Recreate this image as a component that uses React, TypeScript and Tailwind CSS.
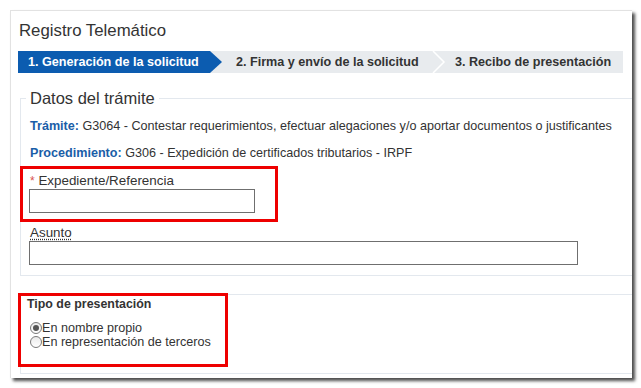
import React from 'react'

const font = { fontFamily: '"Liberation Sans", Arial, sans-serif' }

function Radio({ checked }: { checked?: boolean }) {
  return (
    <span className="inline-flex items-center justify-center w-[12px] h-[12px] rounded-full border border-[#7a7a7a] bg-gradient-to-b from-[#eaeaea] to-white">
      {checked && <span className="w-[6px] h-[6px] rounded-full bg-[#555]" />}
    </span>
  )
}

export default function App() {
  return (
    <div
      className="w-[641px] h-[388px] bg-white pt-[10px] pl-[10px] text-[#333]"
      style={font}
    >
      <div className="relative w-[622px] h-[368px] bg-white border-t border-l border-[#e2e2e2] shadow-[3px_3px_3px_rgba(0,0,0,0.7)]">
        {/* Título */}
        <div className="h-[40px] pl-[8px] flex items-center text-[16.8px] text-[#333]">
          Registro Telemático
        </div>

        {/* Pasos */}
        <div className="relative ml-[7px] w-[605px] h-[22px] bg-[#e8ebee] flex items-center text-[12.6px] font-bold">
          <div className="absolute left-0 top-0 h-[22px] w-[204px] bg-[#0c5cb0] [clip-path:polygon(0_0,192px_0,204px_50%,192px_100%,0_100%)]" />
          <span className="relative pl-[10px] w-[218px] text-white">
            1. Generación de la solicitud
          </span>
          <span className="relative text-[#333]">2. Firma y envío de la solicitud</span>
          <svg
            className="absolute left-[414px] top-0"
            width="14"
            height="22"
            viewBox="0 0 14 22"
          >
            <polyline
              points="1,0 12,11 1,22"
              fill="none"
              stroke="#fff"
              strokeWidth="1.5"
            />
          </svg>
          <span className="absolute left-[437px] text-[#333]">
            3. Recibo de presentación
          </span>
        </div>

        {/* Datos del trámite */}
        <fieldset className="mt-[16px] ml-[9px] border-t border-l border-b border-[#e3e8ee] pl-[9px] pb-[10px] text-[12.6px]">
          <legend className="-ml-[4px] px-[4px] text-[16.5px] leading-[19px] text-[#333]">
            Datos del trámite
          </legend>
          <div className="mt-[9px] h-[18px] leading-[18px] whitespace-nowrap">
            <span className="font-bold text-[#1a5ea8]">Trámite:</span> G3064 -
            Contestar requerimientos, efectuar alegaciones y/o aportar
            documentos o justificantes
          </div>
          <div className="mt-[9px] h-[18px] leading-[18px] whitespace-nowrap">
            <span className="font-bold text-[#1a5ea8]">Procedimiento:</span>{' '}
            G306 - Expedición de certificados tributarios - IRPF
          </div>
          <div className="mt-[11px] h-[16px] leading-[16px] text-[13.4px]">
            <span className="text-[#d9534f] text-[12px]">*</span> Expediente/Referencia
          </div>
          <div className="-ml-[1px] w-[226px] h-[24px] border border-[#6f6f6f] bg-white" />
          <div className="mt-[12px] h-[16px] leading-[16px] text-[13.4px]">
            <span className="underline decoration-dotted underline-offset-2">
              Asunto
            </span>
          </div>
          <div className="-ml-[1px] w-[549px] h-[24px] border border-[#6f6f6f] bg-white" />
        </fieldset>

        {/* Tipo de presentación */}
        <div className="mt-[18px] ml-[9px] h-[80px] border-t border-l border-b border-[#e3e8ee] pl-[6px] pt-[1px] text-[12.4px]">
          <div className="h-[16px] leading-[16px] font-bold">Tipo de presentación</div>
          <div className="mt-[9px] flex flex-col ml-[3px] text-[12.6px]">
            <label className="flex items-center h-[14px]">
              <Radio checked />
              En nombre propio
            </label>
            <label className="flex items-center h-[14px]">
              <Radio />
              En representación de terceros
            </label>
          </div>
        </div>

        {/* Marcas rojas */}
        <div className="absolute left-[9px] top-[155px] w-[258px] h-[56px] border-[3px] border-[#ee0000]" />
        <div className="absolute left-[7px] top-[282px] w-[210px] h-[74px] border-[3px] border-[#ee0000]" />
      </div>
    </div>
  )
}
